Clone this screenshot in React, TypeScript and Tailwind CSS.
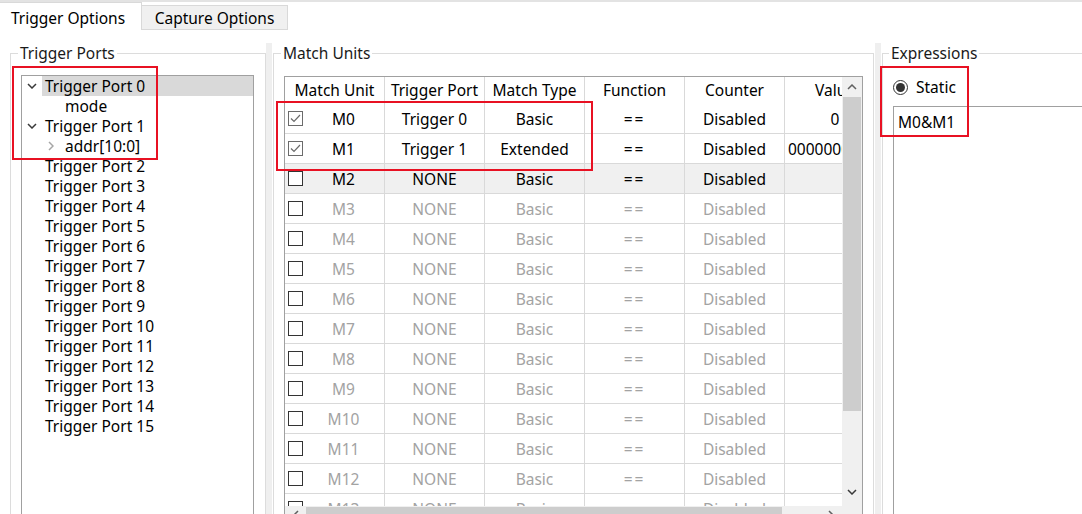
import React from "react";

const FONT = { fontFamily: '"Noto Sans", "Segoe UI", "Liberation Sans", sans-serif' };

function ChevronDown({ className = "" }: { className?: string }) {
  return (
    <svg width="10" height="6" viewBox="0 0 10 6" className={className}>
      <path d="M1 1 L5 5 L9 1" fill="none" stroke="#3a3a3a" strokeWidth="1.5" />
    </svg>
  );
}

function ChevronRight({ color = "#a6a6a6" }: { color?: string }) {
  return (
    <svg width="6" height="10" viewBox="0 0 6 10">
      <path d="M1 1 L5 5 L1 9" fill="none" stroke={color} strokeWidth="1.5" />
    </svg>
  );
}

function ChevronUp({ color = "#606060" }: { color?: string }) {
  return (
    <svg width="10" height="6" viewBox="0 0 10 6">
      <path d="M1 5 L5 1 L9 5" fill="none" stroke={color} strokeWidth="1.5" />
    </svg>
  );
}

function ChevronLeft({ color = "#606060" }: { color?: string }) {
  return (
    <svg width="6" height="10" viewBox="0 0 6 10">
      <path d="M5 1 L1 5 L5 9" fill="none" stroke={color} strokeWidth="1.5" />
    </svg>
  );
}

function Checkbox({ checked }: { checked: boolean }) {
  return (
    <div
      className={`w-[15px] h-[15px] border bg-white flex items-center justify-center shrink-0 ${
        checked ? "border-[#6b6b6b]" : "border-[#333333]"
      }`}
    >
      {checked && (
        <svg width="11" height="9" viewBox="0 0 11 9">
          <path d="M1 4.5 L4 7.5 L10 1" fill="none" stroke="#6b6b6b" strokeWidth="1.2" />
        </svg>
      )}
    </div>
  );
}

type Row = {
  unit: string;
  port: string;
  type: string;
  value: string;
  checked: boolean;
  enabled: boolean;
  highlight?: boolean;
  valueLeft?: boolean;
};

const rows: Row[] = [
  { unit: "M0", port: "Trigger 0", type: "Basic", value: "0", checked: true, enabled: true },
  { unit: "M1", port: "Trigger 1", type: "Extended", value: "00000000000", checked: true, enabled: true, valueLeft: true },
  { unit: "M2", port: "NONE", type: "Basic", value: "", checked: false, enabled: true, highlight: true },
  ...Array.from({ length: 11 }, (_, i) => ({
    unit: `M${i + 3}`,
    port: "NONE",
    type: "Basic",
    value: "",
    checked: false,
    enabled: false,
  })),
];

const treeItems: { label: string; indent: number; icon?: "down" | "right"; selected?: boolean }[] = [
  { label: "Trigger Port 0", indent: 0, icon: "down", selected: true },
  { label: "mode", indent: 1 },
  { label: "Trigger Port 1", indent: 0, icon: "down" },
  { label: "addr[10:0]", indent: 1, icon: "right" },
  ...Array.from({ length: 14 }, (_, i) => ({ label: `Trigger Port ${i + 2}`, indent: 0 })),
];

export default function App() {
  return (
    <div
      className="relative w-[1082px] h-[514px] overflow-hidden bg-white text-[15.5px] text-black"
      style={FONT}
    >
      {/* Tab bar */}
      <div className="flex items-end h-[30px] border-t-2 border-[#e3e3e3] bg-white">
        <div className="w-[142px] h-[28px] bg-white border-t border-r border-[#d9d9d9] pl-[11px] flex items-center leading-none pt-[5px]">
          Trigger Options
        </div>
        <div className="w-[146px] h-[25px] bg-[#f0f0f0] border-t border-r border-b border-[#d9d9d9] flex items-center justify-center leading-none pt-[3px]">
          Capture Options
        </div>
      </div>

      {/* Content */}
      <div className="flex h-[484px]">
        {/* Left pane */}
        <div className="w-[266px] shrink-0 pt-[13px]">
          <fieldset className="ml-[10px] w-[256px] h-[520px] border border-[#dcdcdc] px-0">
            <legend className="ml-[7px] px-[2px] h-[20px] leading-[20px] text-[#1a1a1a]">Trigger Ports</legend>
            <div className="mt-[12px] ml-[10px] w-[233px] h-[480px] border border-[#a0a0a0] pt-0">
              {treeItems.map((it, i) => (
                <div key={i} className="h-[20px] flex items-center">
                  <div className="w-[20px] shrink-0 flex items-center justify-center">
                    {it.icon === "down" && it.indent === 0 && <ChevronDown />}
                  </div>
                  <div
                    className={`flex-1 h-full flex items-center ${it.selected ? "bg-[#d9d9d9]" : ""}`}
                  >
                    {it.indent === 1 ? (
                      <div className="flex items-center">
                        <div className="w-[23px] flex items-center justify-start pl-[6px]">
                          {it.icon === "right" && <ChevronRight />}
                        </div>
                        <span className="leading-none pt-[2px]">{it.label}</span>
                      </div>
                    ) : (
                      <span className="pl-[3px] leading-none pt-[2px]">{it.label}</span>
                    )}
                  </div>
                </div>
              ))}
            </div>
          </fieldset>
        </div>

        {/* Splitter */}
        <div className="w-[6px] shrink-0 mt-[13px] bg-[#efefef]" />

        {/* Middle pane */}
        <div className="w-[603px] shrink-0 pt-[13px]">
          <fieldset className="ml-[1px] w-[601px] h-[520px] border border-[#dcdcdc] px-0">
            <legend className="ml-[7px] px-[2px] h-[20px] leading-[20px] text-[#1a1a1a]">Match Units</legend>
            <div className="mt-[13px] ml-[10px] w-[579px] h-[448px] border border-[#a0a0a0] flex flex-col">
              <div className="flex h-[429px]">
                <div className="w-[557px] overflow-hidden">
                  <div className="w-[700px]">
                    {/* header */}
                    <div className="flex h-[27px] items-center">
                      {["Match Unit", "Trigger Port", "Match Type", "Function", "Counter", "Value"].map((h, i) => (
                        <div
                          key={h}
                          className={`w-[100px] h-full flex items-center justify-center shrink-0 whitespace-nowrap pt-[1px] ${
                            i < 5 ? "border-r border-[#d9d9d9]" : ""
                          }`}
                        >
                          {h}
                        </div>
                      ))}
                    </div>
                    {rows.map((r) => {
                      const color = r.enabled ? "text-black" : "text-[#a3a3a3]";
                      return (
                        <div
                          key={r.unit}
                          className={`flex h-[30px] border-b border-[#d9d9d9] ${r.highlight ? "bg-[#f0f0f0]" : ""} ${color}`}
                        >
                          <div className="w-[100px] shrink-0 border-r border-[#d9d9d9] flex items-center pl-[3px]">
                            <Checkbox checked={r.checked} />
                            <span className="flex-1 text-center pt-[3px]">{r.unit}</span>
                          </div>
                          <div className="w-[100px] shrink-0 border-r border-[#d9d9d9] flex items-center justify-center pt-[3px]">
                            {r.port}
                          </div>
                          <div className="w-[100px] shrink-0 border-r border-[#d9d9d9] flex items-center justify-center pt-[3px]">
                            {r.type}
                          </div>
                          <div className="w-[100px] shrink-0 border-r border-[#d9d9d9] flex items-center justify-center tracking-[2px] pt-[3px]">
                            ==
                          </div>
                          <div className="w-[100px] shrink-0 border-r border-[#d9d9d9] flex items-center justify-center pt-[3px]">
                            Disabled
                          </div>
                          <div
                            className={`w-[100px] shrink-0 flex items-center whitespace-nowrap pt-[3px] ${
                              r.valueLeft ? "pl-[3px]" : "justify-center"
                            }`}
                          >
                            {r.value}
                          </div>
                        </div>
                      );
                    })}
                  </div>
                </div>
                {/* Vertical scrollbar */}
                <div className="w-[20px] shrink-0 bg-[#f0f0f0] flex flex-col">
                  <div className="h-[20px] flex items-center justify-center">
                    <ChevronUp />
                  </div>
                  <div className="h-[314px] mx-[1px] bg-[#cdcdcd]" />
                  <div className="flex-1" />
                  <div className="h-[24px] flex items-center justify-center pb-[4px]">
                    <ChevronDown />
                  </div>
                </div>
              </div>
              {/* Horizontal scrollbar */}
              <div className="flex h-[17px] bg-[#f0f0f0]">
                <div className="w-[21px] flex items-center justify-center">
                  <ChevronLeft />
                </div>
                <div className="w-[476px] my-[1px] bg-[#cdcdcd]" />
                <div className="flex-1 flex items-center justify-end pr-[28px]">
                  <ChevronRight color="#606060" />
                </div>
              </div>
            </div>
          </fieldset>
        </div>

        {/* Splitter */}
        <div className="w-[6px] shrink-0 mt-[13px] bg-[#efefef]" />

        {/* Right pane */}
        <div className="flex-1 min-w-0 pt-[13px]">
          <fieldset className="ml-[1px] w-[260px] h-[520px] border border-[#dcdcdc] px-0">
            <legend className="ml-[6px] px-[2px] h-[20px] leading-[20px] text-[#1a1a1a]">Expressions</legend>
            <div className="mt-[14px] ml-[10px] h-[20px] flex items-center gap-[8px]">
              <div className="w-[15px] h-[15px] rounded-full border border-[#333333] flex items-center justify-center">
                <div className="w-[9px] h-[9px] rounded-full bg-[#333333]" />
              </div>
              <span className="leading-none pt-[2px]">Static</span>
            </div>
            <div className="mt-[9px] ml-[10px] h-[420px] border border-[#a0a0a0] px-[4px] pt-[3px]">
              <span className="leading-[24px]">M0&amp;M1</span>
            </div>
          </fieldset>
        </div>
      </div>

      {/* Red annotation boxes */}
      <div className="absolute left-[12px] top-[66px] w-[146px] h-[94px] border-2 border-[#e81123]" />
      <div className="absolute left-[276px] top-[101px] w-[317px] h-[70px] border-2 border-[#e81123]" />
      <div className="absolute left-[880px] top-[66px] w-[89px] h-[71px] border-2 border-[#e81123]" />
    </div>
  );
}
